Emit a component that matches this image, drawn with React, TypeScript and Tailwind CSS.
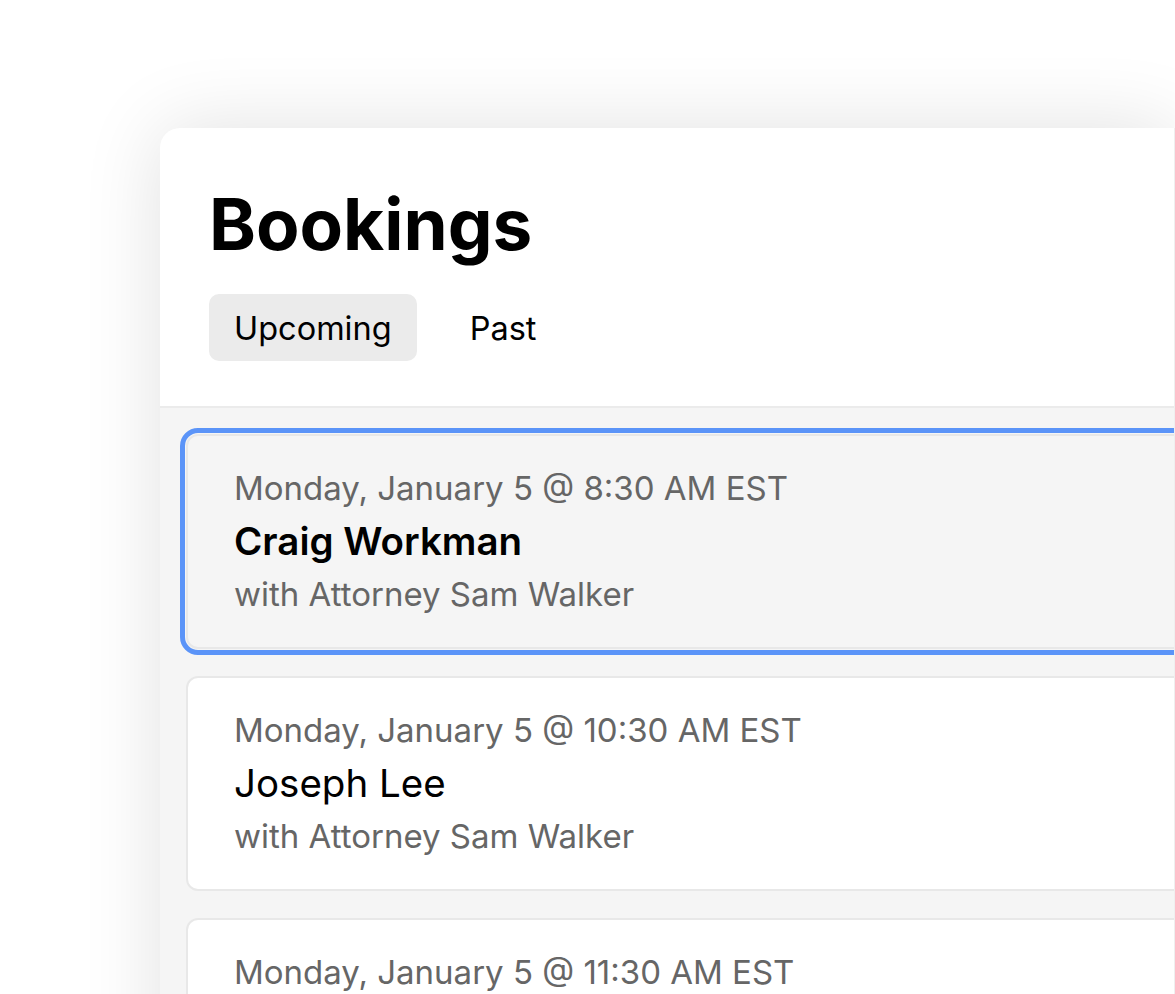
import React from "react";

const bookings = [
  { when: "Monday, January 5 @ 8:30 AM EST", client: "Craig Workman", lawyer: "with Attorney Sam Walker", active: true },
  { when: "Monday, January 5 @ 10:30 AM EST", client: "Joseph Lee", lawyer: "with Attorney Sam Walker", active: false },
  { when: "Monday, January 5 @ 11:30 AM EST", client: "Maria Chen", lawyer: "with Attorney Sam Walker", active: false },
];

function BookingCard({ when, client, lawyer, active }: (typeof bookings)[number]) {
  return (
    <div
      className={
        "w-[1100px] shrink-0 rounded-[12px] border-2 border-[#e8e8e8] px-[46px] py-[26px] " +
        (active ? "bg-[#f5f5f5] outline-[5px] outline-offset-[1px] outline-[#5b94f8]" : "bg-white")
      }
    >
      <p className="text-[33px] leading-[53px] text-[#666666]">{when}</p>
      <p className={"text-[38.5px] leading-[53px] text-black " + (active ? "font-semibold" : "font-normal")}>
        {client}
      </p>
      <p className="text-[33px] leading-[53px] text-[#666666]">{lawyer}</p>
    </div>
  );
}

export default function App() {
  return (
    <div
      className="w-[1175px] h-[994px] overflow-hidden bg-white pl-[160px] pt-[128px]"
      style={{ fontFamily: "Inter, 'Noto Sans', sans-serif" }}
    >
      <div className="w-[1015px] h-[1000px] rounded-tl-[20px] bg-white border-r border-[#efefef] shadow-[0_0_80px_rgba(0,0,0,0.12)] overflow-hidden">
        <div className="px-[49px] pt-[52px] pb-[45px] border-b-2 border-[#ebebeb]">
          <h1 className="text-[71px] leading-[88px] font-bold text-black">Bookings</h1>
          <div className="flex items-center gap-[28px] mt-[26px]">
            <button className="h-[67px] pt-[3px] px-[25px] rounded-[10px] bg-[#ebebeb] text-[32.5px] text-black">
              Upcoming
            </button>
            <button className="h-[67px] pt-[3px] px-[25px] rounded-[10px] text-[32.5px] text-black">Past</button>
          </div>
        </div>
        <div className="bg-[#f5f5f5] pl-[26px] pt-[26px] flex flex-col gap-[27px] h-full">
          {bookings.map((b) => (
            <BookingCard key={b.when} {...b} />
          ))}
        </div>
      </div>
    </div>
  );
}
